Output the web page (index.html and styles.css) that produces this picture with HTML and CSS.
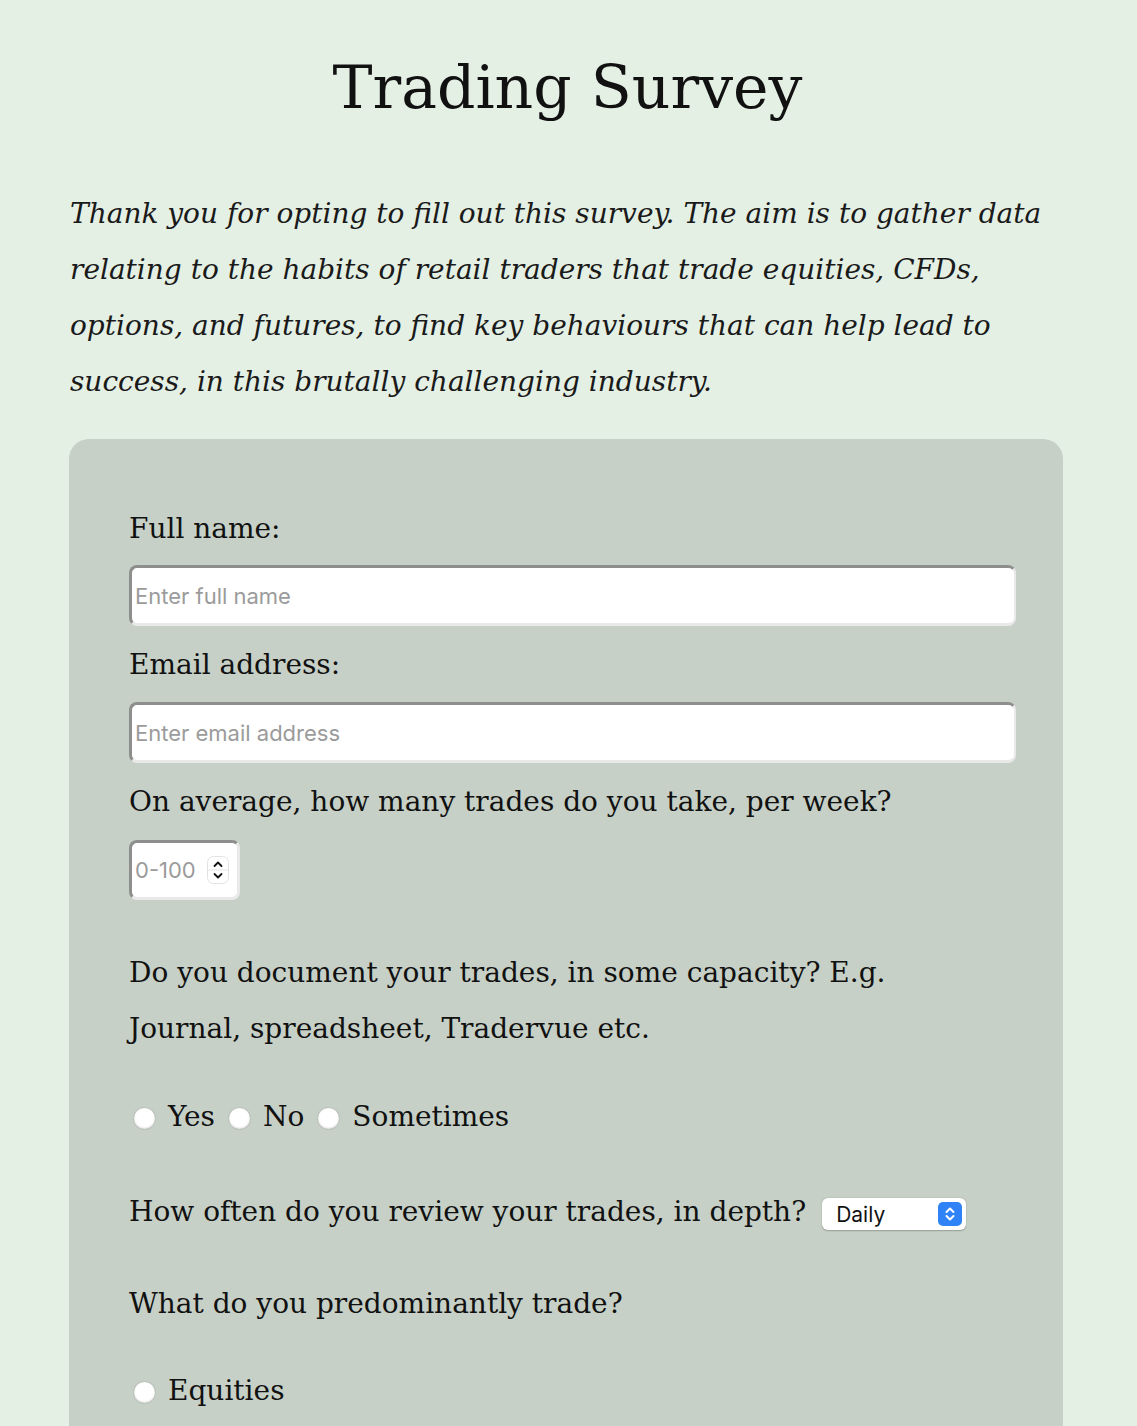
FILE: index.html
```html
<!DOCTYPE html>
<html lang="en">
<head>
<meta charset="utf-8">
<title>Trading Survey</title>
<link rel="stylesheet" href="styles.css">
</head>
<body>
<div class="page">
  <h1 class="title">Trading Survey</h1>
  <p class="intro">Thank you for opting to fill out this survey. The aim is to gather data relating to the habits of retail traders that trade equities, CFDs, options, and futures, to find key behaviours that can help lead to success, in this brutally challenging industry.</p>
  <form class="panel">
    <label class="label" for="name">Full name:</label>
    <input class="field first" id="name" type="text" placeholder="Enter full name">
    <label class="label" for="email">Email address:</label>
    <input class="field" id="email" type="text" placeholder="Enter email address">
    <label class="label" for="trades">On average, how many trades do you take, per week?</label>
    <div class="numbox">
      <input class="numinput" id="trades" type="text" placeholder="0-100">
      <svg class="spin" width="22" height="28" viewBox="0 0 22 28">
        <rect x="0.5" y="0.5" width="21" height="27" rx="6" fill="#fff" stroke="#e2e2e2"/>
        <line x1="1" y1="14" x2="21" y2="14" stroke="#e6e6e6"/>
        <path d="M7.5 10 L11 6.5 L14.5 10" fill="none" stroke="#111" stroke-width="1.8" stroke-linecap="round" stroke-linejoin="round"/>
        <path d="M7.5 18 L11 21.5 L14.5 18" fill="none" stroke="#111" stroke-width="1.8" stroke-linecap="round" stroke-linejoin="round"/>
      </svg>
    </div>
    <p class="question">Do you document your trades, in some capacity? E.g. Journal, spreadsheet, Tradervue etc.</p>
    <div class="radios">
      <label class="opt"><input class="radio" type="radio" name="doc">Yes</label>
      <label class="opt"><input class="radio" type="radio" name="doc">No</label>
      <label class="opt"><input class="radio" type="radio" name="doc">Sometimes</label>
    </div>
    <div class="selrow">
      <label class="label inline" for="review">How often do you review your trades, in depth?</label>
      <div class="selbox">
        <select class="select" id="review">
          <option>Daily</option>
          <option>Weekly</option>
          <option>Monthly</option>
        </select>
        <svg class="selarrow" width="24" height="24" viewBox="0 0 24 24">
          <rect x="0" y="0" width="24" height="24" rx="5" fill="#2f83f7"/>
          <path d="M8.5 10 L12 6.5 L15.5 10" fill="none" stroke="#fff" stroke-width="2" stroke-linecap="round" stroke-linejoin="round"/>
          <path d="M8.5 14 L12 17.5 L15.5 14" fill="none" stroke="#fff" stroke-width="2" stroke-linecap="round" stroke-linejoin="round"/>
        </svg>
      </div>
    </div>
    <p class="label">What do you predominantly trade?</p>
    <div class="radios stack">
      <label class="opt"><input class="radio" type="radio" name="what">Equities</label>
    </div>
  </form>
</div>
</body>
</html>
```

FILE: styles.css
```css
html, body {
  margin: 0;
  padding: 0;
  background: #e5f0e5;
}
body {
  font-family: "DejaVu Serif", "Liberation Serif", serif;
  color: #111;
  height: 1426px;
  overflow: hidden;
}
.page {
  width: 994px;
  margin: 0 0 0 69px;
  padding-top: 51px;
}
.title {
  margin: 0 0 0 3px;
  font-size: 60px;
  font-weight: normal;
  line-height: 72px;
  text-align: center;
  color: #111;
}
.intro {
  margin: 63px 0 29px 1px;
  font-style: italic;
  font-size: 28px;
  line-height: 56px;
  color: #1a1a1a;
}
.panel {
  display: flex;
  flex-direction: column;
  align-items: flex-start;
  background: #c6d0c6;
  border-radius: 20px;
  padding: 62px 60px 60px 60px;
  min-height: 1200px;
}
.label, .question {
  display: block;
  margin: 0;
  font-size: 28px;
  line-height: 56px;
}
.question {
  margin-top: 45px;
}
.field {
  box-sizing: border-box;
  width: calc(100% + 13px);
  height: 61px;
  margin: 9px 0 11px;
  padding: 0 0 0 3px;
  border-style: solid;
  border-width: 3px 2px 3px 3px;
  border-color: #8e8e8e #e9e9e9 #e9e9e9 #8e8e8e;
  border-radius: 8px;
  background: #fff;
  font-family: Inter, "Liberation Sans", sans-serif;
  font-size: 22px;
  color: #222;
  outline: none;
}
.field.first {
  margin-top: 8px;
}
.field::placeholder, .numinput::placeholder {
  color: #9b9b9b;
}
.numbox {
  box-sizing: border-box;
  display: flex;
  align-items: center;
  width: 111px;
  height: 60px;
  margin-top: 10px;
  padding: 0 8px 0 3px;
  border-style: solid;
  border-width: 3px 3px 3px 3px;
  border-color: #8e8e8e #e9e9e9 #e9e9e9 #8e8e8e;
  border-radius: 8px;
  background: #fff;
}
.numinput {
  flex: 1;
  min-width: 0;
  border: 0;
  padding: 0;
  outline: none;
  font-family: Inter, "Liberation Sans", sans-serif;
  font-size: 22px;
  background: transparent;
}
.spin {
  flex: none;
}
.radios {
  display: flex;
  align-items: center;
  gap: 14px;
  margin-top: 32px;
  font-size: 28px;
  line-height: 56px;
}
.opt {
  display: flex;
  align-items: center;
}
.radio {
  appearance: none;
  -webkit-appearance: none;
  width: 21px;
  height: 21px;
  margin: 3px 13px 0 5px;
  border-radius: 50%;
  background: #fff;
  box-shadow: 0 0 0 1px rgba(0,0,0,0.06), inset 0 -1px 2px rgba(0,0,0,0.12);
}
.opt + .opt .radio {
  margin-left: 0;
}
.selrow {
  display: flex;
  align-items: center;
  margin-top: 39px;
}
.selbox {
  display: flex;
  align-items: center;
  width: 144px;
  height: 32px;
  box-sizing: border-box;
  margin: 4px 0 0 16px;
  padding: 0 4px 0 14px;
  background: #fff;
  border-radius: 6px;
  box-shadow: 0 0.5px 1.5px rgba(0,0,0,0.25);
}
.select {
  appearance: none;
  -webkit-appearance: none;
  flex: 1;
  min-width: 0;
  border: 0;
  padding: 0;
  background: transparent;
  font-family: Inter, "Liberation Sans", sans-serif;
  font-size: 21px;
  color: #111;
  outline: none;
}
.selarrow {
  flex: none;
}
.selrow + .label {
  margin-top: 36px;
}
.stack {
  margin-top: 31px;
}
```
